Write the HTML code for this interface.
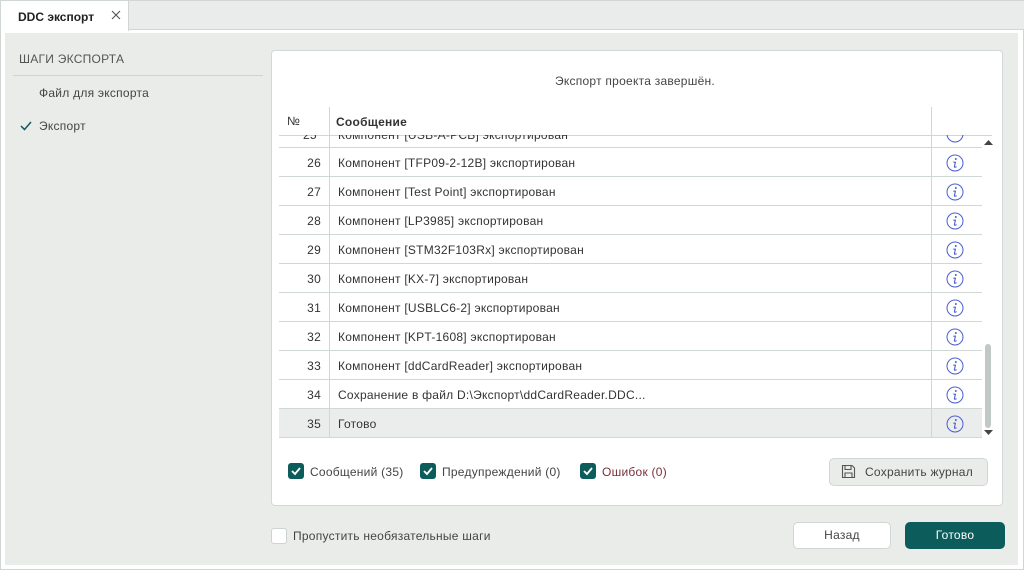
<!DOCTYPE html>
<html><head><meta charset="utf-8"><style>
*{box-sizing:border-box;margin:0;padding:0}
body{width:1024px;height:570px;overflow:hidden;background:#fff;font-family:"Liberation Sans",sans-serif;color:#333;position:relative;font-size:12px;letter-spacing:0.25px}
.abs{position:absolute}
.tabbar{left:0;top:0;width:1024px;height:30px;background:#eaeceb;border-top:1px solid #cfd6d4;border-bottom:1px solid #cfd6d4;border-left:1px solid #cfd6d4}
.tab{left:1px;top:0;width:128px;height:31px;background:#fff;border-right:1px solid #cfd6d4;border-top:1px solid #cfd6d4}
.main{left:5px;top:33px;width:1013px;height:532px;background:#eaecea}
.frame{left:0;top:30px;width:1024px;height:540px;border-left:1px solid #cfd6d4;border-bottom:1px solid #cfd6d4;border-right:1px solid #cfd6d4}
.panel{left:271px;top:50px;width:732px;height:456px;background:#fff;border:1px solid #d3d9d7;border-radius:4px}
.row{left:279px;width:703px;height:29px;border-bottom:1px solid #d0d8d6;font-size:12px;color:#333}
.row .n{position:absolute;left:0;width:42px;text-align:right;top:8px}
.row .m{position:absolute;left:59px;top:8px}
.vl{width:1px;background:#d0d8d6}
.info{position:absolute;left:667px;top:6px}
.cb{width:16px;height:16px;background:#0b5c5b;border-radius:3px}
.btn{border:1px solid #cfd6d4;border-radius:5px;text-align:center;font-size:12px}
</style></head><body>
<div class="abs tabbar"></div>
<div class="abs tab"><span class="abs" style="left:17px;top:9px;font-weight:bold;font-size:12px;color:#222;letter-spacing:0">DDC экспорт</span>
<svg class="abs" style="left:110px;top:9px" width="10" height="10"><path d="M1 1L9 9M9 1L1 9" stroke="#555" stroke-width="1.1"/></svg></div>
<div class="abs frame"></div>
<div class="abs main"></div>
<div class="abs" style="left:19px;top:52px;font-size:12px;color:#555">ШАГИ ЭКСПОРТА</div>
<div class="abs" style="left:13px;top:75px;width:250px;height:1px;background:#cdd4d2"></div>
<div class="abs" style="left:39px;top:86px;color:#444">Файл для экспорта</div>
<svg class="abs" style="left:20px;top:121px" width="12" height="10"><path d="M1 5L4.5 8.5L11 1" stroke="#0b5c5b" stroke-width="1.5" fill="none"/></svg>
<div class="abs" style="left:39px;top:119px;color:#444">Экспорт</div>
<div class="abs panel"></div>
<div class="abs" style="left:555px;top:74px;color:#444">Экспорт проекта завершён.</div>
<div class="abs" style="left:287px;top:114px;font-size:12px;color:#333">№</div>
<div class="abs" style="left:336px;top:115px;font-weight:bold;color:#333">Сообщение</div>
<div class="abs" style="left:279px;top:135px;width:713px;height:1px;background:#d0d8d6"></div>
<div class="abs" style="left:279px;top:135px;width:703px;height:13px;overflow:hidden;border-bottom:1px solid #d0d8d6">
<span class="abs" style="left:24px;top:-7px">25</span><span class="abs" style="left:59px;top:-7px">Компонент [USB-A-PCB] экспортирован</span>
<svg class="abs" style="left:667px;top:-10px" width="18" height="18"><circle cx="9" cy="9" r="8" fill="none" stroke="#4a5fd0" stroke-width="1"/></svg></div>
<div id="rows"></div>
<div class="abs vl" style="left:329px;top:107px;height:331px"></div>
<div class="abs vl" style="left:931px;top:107px;height:331px"></div>
<div class="abs" style="left:985px;top:344px;width:6px;height:84px;background:#c1c9c7;border-radius:3px"></div>
<svg class="abs" style="left:984px;top:140px" width="9" height="6"><path d="M0 5L4.5 0L9 5Z" fill="#444"/></svg>
<svg class="abs" style="left:984px;top:430px" width="9" height="6"><path d="M0 0L4.5 5L9 0Z" fill="#444"/></svg>
<div class="abs cb" style="left:288px;top:463px"></div>
<div class="abs cb" style="left:420px;top:463px"></div>
<div class="abs cb" style="left:580px;top:463px"></div>
<svg class="abs" style="left:288px;top:463px" width="16" height="16"><path d="M4 8L7 11L12 5" stroke="#fff" stroke-width="1.8" fill="none"/></svg>
<svg class="abs" style="left:420px;top:463px" width="16" height="16"><path d="M4 8L7 11L12 5" stroke="#fff" stroke-width="1.8" fill="none"/></svg>
<svg class="abs" style="left:580px;top:463px" width="16" height="16"><path d="M4 8L7 11L12 5" stroke="#fff" stroke-width="1.8" fill="none"/></svg>
<div class="abs" style="left:310px;top:465px;color:#444">Сообщений (35)</div>
<div class="abs" style="left:442px;top:465px;color:#444">Предупреждений (0)</div>
<div class="abs" style="left:602px;top:465px;color:#7a2f3a">Ошибок (0)</div>
<div class="abs btn" style="left:829px;top:458px;width:159px;height:28px;background:#eaecea"></div>
<svg class="abs" style="left:841px;top:464px" width="15" height="15"><path d="M1.5 1.5H11L13.5 4V13.5H1.5Z M4 1.5V5.5H10V1.5 M4 13.5V9H11V13.5" stroke="#555" stroke-width="1.1" fill="none"/></svg>
<div class="abs" style="left:865px;top:465px;color:#444">Сохранить журнал</div>
<div class="abs" style="left:271px;top:528px;width:16px;height:16px;background:#fff;border:1px solid #cdd4d2;border-radius:3px"></div>
<div class="abs" style="left:293px;top:529px;color:#444">Пропустить необязательные шаги</div>
<div class="abs btn" style="left:793px;top:522px;width:98px;height:27px;background:#fff;line-height:25px;color:#444">Назад</div>
<div class="abs btn" style="left:905px;top:522px;width:100px;height:27px;background:#0b5c5b;border-color:#0b5c5b;line-height:25px;color:#fff">Готово</div>
<script>
var d=[[26,"Компонент [TFP09-2-12B] экспортирован"],[27,"Компонент [Test Point] экспортирован"],[28,"Компонент [LP3985] экспортирован"],[29,"Компонент [STM32F103Rx] экспортирован"],[30,"Компонент [KX-7] экспортирован"],[31,"Компонент [USBLC6-2] экспортирован"],[32,"Компонент [KPT-1608] экспортирован"],[33,"Компонент [ddCardReader] экспортирован"],[34,"Сохранение в файл D:\\Экспорт\\ddCardReader.DDC..."],[35,"Готово"]];
var h="";d.forEach(function(r,i){var t=148+i*29;h+='<div class="abs row" style="top:'+t+'px;'+(r[0]==35?'background:#ebedec;':'')+'"><span class="n">'+r[0]+'</span><span class="m">'+r[1].replace(/</g,"&lt;")+'</span><svg class="info" width="18" height="18"><circle cx="9" cy="9" r="8" fill="none" stroke="#4a5fd0" stroke-width="1"/><circle cx="9.8" cy="5" r="1" fill="#4a5fd0"/><path d="M7.3 8.2H9.4L8.4 12.6Q8.3 13.4 9.2 13.2L10.6 12.6" stroke="#4a5fd0" stroke-width="1.1" fill="none"/></svg></div>';});
document.getElementById("rows").innerHTML=h;
</script>
</body></html>
